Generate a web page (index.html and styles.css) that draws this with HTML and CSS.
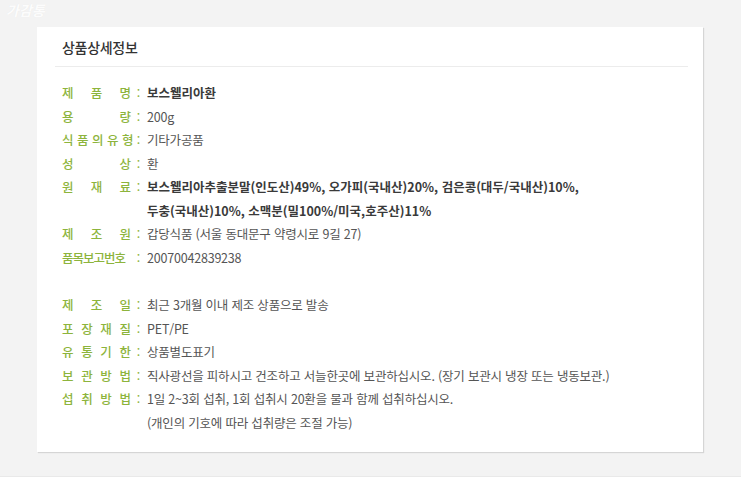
FILE: index.html
```html
<!DOCTYPE html>
<html lang="ko">
<head>
<meta charset="utf-8">
<link rel="stylesheet" href="styles.css">
</head>
<body>
<div class="page">
  <div class="watermark">가감통</div>
  <div class="card">
    <h2 class="title">상품상세정보</h2>
    <div class="rows">
      <div class="row"><span class="label">제 품 명</span><span class="colon">:</span><span class="value strong">보스웰리아환</span></div>
      <div class="row"><span class="label">용 량</span><span class="colon">:</span><span class="value">200g</span></div>
      <div class="row"><span class="label">식 품 의 유 형</span><span class="colon">:</span><span class="value">기타가공품</span></div>
      <div class="row"><span class="label">성 상</span><span class="colon">:</span><span class="value">환</span></div>
      <div class="row"><span class="label">원 재 료</span><span class="colon">:</span><span class="value strong">보스웰리아추출분말(인도산)49%, 오가피(국내산)20%, 검은콩(대두/국내산)10%,<br>두충(국내산)10%, 소맥분(밀100%/미국,호주산)11%</span></div>
      <div class="row"><span class="label">제 조 원</span><span class="colon">:</span><span class="value">갑당식품 (서울 동대문구 약령시로 9길 27)</span></div>
      <div class="row"><span class="label tight">품목보고번호</span><span class="colon">:</span><span class="value">20070042839238</span></div>
      <div class="spacer"></div>
      <div class="row"><span class="label">제 조 일</span><span class="colon">:</span><span class="value">최근 3개월 이내 제조 상품으로 발송</span></div>
      <div class="row"><span class="label">포 장 재 질</span><span class="colon">:</span><span class="value">PET/PE</span></div>
      <div class="row"><span class="label">유 통 기 한</span><span class="colon">:</span><span class="value">상품별도표기</span></div>
      <div class="row"><span class="label">보 관 방 법</span><span class="colon">:</span><span class="value">직사광선을 피하시고 건조하고 서늘한곳에 보관하십시오. (장기 보관시 냉장 또는 냉동보관.)</span></div>
      <div class="row"><span class="label">섭 취 방 법</span><span class="colon">:</span><span class="value">1일 2~3회 섭취, 1회 섭취시 20환을 물과 함께 섭취하십시오.<br>(개인의 기호에 따라 섭취량은 조절 가능)</span></div>
    </div>
  </div>
</div>
</body>
</html>
```

FILE: styles.css
```css
* { box-sizing: border-box; }
html, body { margin: 0; padding: 0; }
body {
  background: #f3f3f3;
  font-family: "Noto Sans CJK KR", "Noto Sans", sans-serif;
  width: 741px;
  height: 477px;
  overflow: hidden;
}
.page {
  position: relative;
  padding: 27px 0 0 37px;
  height: 477px;
  border-bottom: 1px solid #e9e9e9;
}
.watermark {
  position: absolute;
  left: 6px;
  top: 1px;
  font-size: 14px;
  line-height: 18px;
  font-weight: bold;
  font-style: italic;
  color: rgba(255,255,255,0.92);
  text-shadow: 0 0 1px rgba(0,0,0,0.06);
}
.card {
  width: 666px;
  height: 425px;
  background: #fff;
  box-shadow: 1px 1px 1px rgba(0,0,0,0.12);
  padding: 0 15px 0 18px;
}
.title {
  margin: 0;
  padding: 10px 0 0 7px;
  height: 40px;
  border-bottom: 1px solid #ececec;
  font-size: 14px;
  font-weight: 500;
  color: #333;
  line-height: 20px;
  letter-spacing: -0.3px;
}
.rows {
  padding: 14px 0 0 7px;
  font-size: 12.5px;
  line-height: 23.5px;
}
.row {
  display: flex;
}
.label {
  width: 69px;
  flex: none;
  color: #8db43c;
  font-weight: 500;
  white-space: nowrap;
  text-align: justify;
  text-align-last: justify;
}
.label.tight {
  letter-spacing: -1px;
}
.colon {
  color: #8db43c;
  width: 15px;
  flex: none;
  text-align: center;
}
.value {
  color: #555;
  margin-left: 1px;
  letter-spacing: -0.2px;
}
.strong {
  color: #3a3a3a;
  font-weight: bold;
  letter-spacing: 0;
}
.spacer { height: 24px; }
```
